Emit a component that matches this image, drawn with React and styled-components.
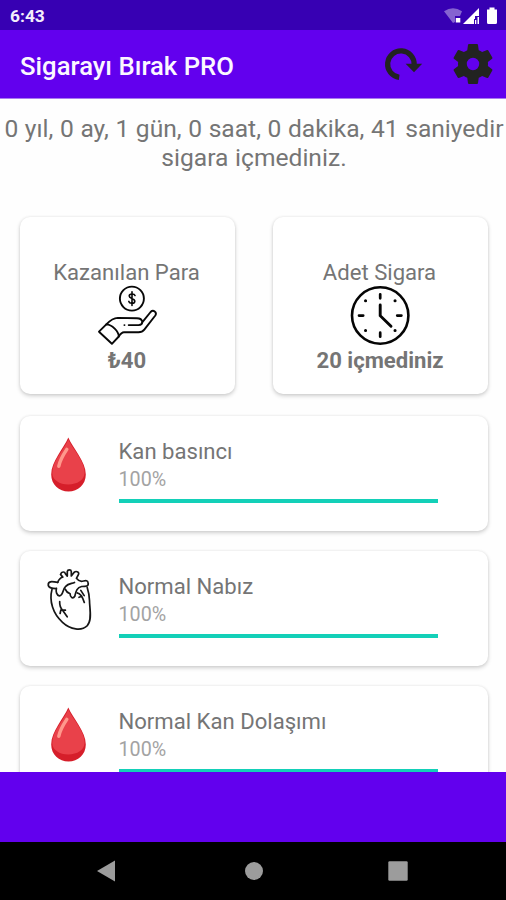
import React from 'react';
import styled, { createGlobalStyle } from 'styled-components';

const GlobalStyle = createGlobalStyle`
  * { box-sizing: border-box; }
  body { margin: 0; background: #fefefe; }
`;

const Screen = styled.div`
  display: flex;
  flex-direction: column;
  width: 506px;
  height: 900px;
  overflow: hidden;
  background: #fefefe;
  color: #757575;
  font-family: Roboto, 'Liberation Sans', sans-serif;
`;

const StatusBar = styled.div`
  display: flex;
  flex: none;
  align-items: center;
  justify-content: space-between;
  height: 30px;
  padding: 2px 8px 0 10px;
  background: #3700b3;
  color: #f3eefb;
  font-size: 17.4px;
  font-weight: 700;
`;

const StatusIcons = styled.svg`
  display: block;
  width: 56px;
  height: 20px;
`;

const AppBar = styled.header`
  display: flex;
  flex: none;
  align-items: center;
  justify-content: space-between;
  height: 69px;
  padding: 0 9px 0 20px;
  background: #6200ee;
  border-bottom: 1px solid #a97af0;
`;

const AppTitle = styled.h1`
  margin: 3px 0 0;
  color: #fbf7ff;
  font-size: 25.7px;
  font-weight: 500;
  line-height: 30px;
  white-space: nowrap;
`;

const Actions = styled.div`
  display: flex;
  gap: 22px;
`;

const ActionButton = styled.button`
  display: block;
  width: 48px;
  height: 48px;
  padding: 0;
  border: 0;
  background: none;
  svg { display: block; }
`;

const Content = styled.main`
  flex: 1;
  min-height: 0;
  overflow: hidden;
`;

const Duration = styled.p`
  margin: 0;
  height: 118px;
  padding-top: 15px;
  padding-left: 2px;
  font-size: 24.6px;
  line-height: 29px;
  text-align: center;
  white-space: nowrap;
  word-spacing: 0.5px;
`;

const Card = styled.section`
  border-radius: 10px;
  background: #fff;
  box-shadow: 0 2px 4px rgba(0, 0, 0, 0.18), 0 0 3px rgba(0, 0, 0, 0.08);
`;

const SummaryGrid = styled.div`
  display: grid;
  grid-template-columns: 215px 215px;
  gap: 38px;
  padding: 0 20px;
`;

const SummaryCard = styled(Card)`
  display: flex;
  flex-direction: column;
  align-items: center;
  height: 177px;
  padding-top: 42px;
  svg { display: block; }
`;

const SummaryLabel = styled.div`
  height: 26px;
  padding-right: 2px;
  font-size: 22.1px;
  line-height: 26px;
`;

const SummaryValue = styled.div`
  margin-top: 1px;
  padding-right: 1px;
  font-size: 22.1px;
  font-weight: 700;
  line-height: 27px;
`;

const HealthList = styled.div`
  display: flex;
  flex-direction: column;
  gap: 20px;
  padding: 22px 18px 0 20px;
`;

const HealthCard = styled(Card)`
  display: grid;
  grid-template-columns: 98.5px 319px;
  height: 115px;
`;

const IconCell = styled.div`
  padding: 18px 0 0 18px;
  svg { display: block; }
`;

const HealthBody = styled.div`
  padding-top: 22px;
`;

const HealthTitle = styled.div`
  font-size: 22.1px;
  line-height: 27px;
`;

const Percent = styled.div`
  margin-top: 3px;
  color: #a3a3a3;
  font-size: 19.7px;
  line-height: 24px;
`;

const Track = styled.div`
  height: 4px;
  margin-top: 7px;
  background: #c4eee8;
`;

const Fill = styled.div`
  height: 100%;
  background: #13d0b8;
`;

const BottomBar = styled.div`
  flex: none;
  height: 70px;
  background: #6200ee;
`;

const NavBar = styled.nav`
  display: grid;
  grid-template-columns: 18px 18px 20px;
  flex: none;
  align-items: center;
  column-gap: 128px;
  height: 58px;
  padding-left: 97px;
  background: #000;
  svg { display: block; }
  svg:last-child { margin-left: -1px; }
  svg:nth-child(2) { margin-left: 1.5px; }
`;

function StatusGlyphs() {
  return (
    <StatusIcons viewBox="442 5 56 20">
      <path d="M444 10.2Q453 4.2 462 10.2L460 15H455V21L453 22Z" fill="#8563d0" />
      <rect x="455.8" y="17" width="4.5" height="4.5" fill="#fff" />
      <path d="M463 23 479 7V15H475V18H474V23Z" fill="#fff" />
      <path d="M475 19h1.3v4H475zM477.5 16h1.5v7h-1.5z" fill="#fff" />
      <path d="M489.5 6.5h5v2H497V21.5Q497 23 495.5 23h-7Q487 23 487 21.5V8.5h2.5Z" fill="#fff" />
    </StatusIcons>
  );
}

function RestartIcon() {
  return (
    <svg width="48" height="48" viewBox="379 40 48 48">
      <path d="M399.2 77.4A13.3 13.3 0 1 1 414.2 65" fill="none" stroke="#222321" strokeWidth="5.2" />
      <path d="M405.6 63.7H422.2L414 72.3Z" fill="#222321" />
    </svg>
  );
}

function GearIcon() {
  return (
    <svg width="48" height="48" viewBox="0 0 24 24">
      <path
        fill="#222321"
        fillRule="evenodd"
        d="M19.43 12.98c.04-.32.07-.64.07-.98s-.03-.66-.07-.98l2.11-1.65c.19-.15.24-.42.12-.64l-2-3.46c-.12-.22-.39-.3-.61-.22l-2.49 1c-.52-.4-1.08-.73-1.69-.98l-.38-2.65C14.46 2.18 14.25 2 14 2h-4c-.25 0-.46.18-.49.42l-.38 2.65c-.61.25-1.17.59-1.69.98l-2.49-1c-.23-.09-.49 0-.61.22l-2 3.46c-.13.22-.07.49.12.64l2.11 1.65c-.04.32-.07.65-.07.98s.03.66.07.98l-2.11 1.65c-.19.15-.24.42-.12.64l2 3.46c.12.22.39.3.61.22l2.49-1c.52.4 1.08.73 1.69.98l.38 2.65c.03.24.24.42.49.42h4c.25 0 .46-.18.49-.42l.38-2.65c.61-.25 1.17-.59 1.69-.98l2.49 1c.23.09.49 0 .61-.22l2-3.46c.12-.22.07-.49-.12-.64zM12 15.1a3.1 3.1 0 1 1 0-6.2 3.1 3.1 0 0 1 0 6.2z"
      />
    </svg>
  );
}

function MoneyHandIcon() {
  return (
    <svg width="61" height="61" viewBox="97 285 61 61" fill="none" stroke="#080808" strokeWidth="1.9" strokeLinejoin="round" strokeLinecap="round">
      <circle cx="131.9" cy="298.6" r="12" />
      <path d="M135 295.5C134.4 293.7 129.3 293.2 129.2 296.1C129.2 298.8 134.8 298 134.8 301.2C134.7 304.1 129.5 303.9 128.8 301.4M132 291.7V305.5" strokeWidth="1.6" />
      <path d="M106.3 324.4 99 331.7 111.9 343.8 118.8 336.5C118.8 331.5 112 324.5 106.3 324.4Z" />
      <path d="M106.3 324.4C110 320.6 113.2 318 117.8 317.9L137 318.2C143.2 318.2 144.3 325.1 138.5 325.1H128.7M142 322.6 150.6 312C153.3 309.3 157.3 312.2 155.3 315.5L144.3 329.7C142.5 332 141.2 332.3 138.5 332.3H124C121.6 332.3 120.2 334.3 118.8 336.5" />
      <path d="M124.4 325.1h.1" />
    </svg>
  );
}

function ClockIcon() {
  return (
    <svg width="61" height="61" viewBox="350 285 61 61" fill="none" stroke="#050505" strokeLinecap="round">
      <circle cx="380.2" cy="315.5" r="28.2" strokeWidth="2.6" />
      <path d="M380.2 305V315.7L391 326.3" strokeWidth="2.9" />
      <path d="M380.2 294.3V298.3M380.2 332.7V336.7M359 315.6H363.2M397.2 315.6H401.4" strokeWidth="2.7" />
      <path d="M365.5 300.8h.1M395 300.8h.1M365.5 330.5h.1M395 330.5h.1" strokeWidth="3" />
    </svg>
  );
}

function DropIcon() {
  return (
    <svg width="62" height="62" viewBox="38 434 62 62">
      <path d="M68.3 437.6C73 448.5 85.8 461.5 85.8 474.5C85.8 484.5 78 491.6 68.5 491.6S51.2 484.5 51.2 474.5C51.2 461.5 63.7 448.5 68.3 437.6Z" fill="#d61e2a" />
      <path d="M68.3 439.5C73.2 450 84.8 461 84.6 473C84.4 480 77.2 484.4 68.3 484.4S52.5 479.7 52.3 473.4C52 461.5 63.8 450 68.3 439.5Z" fill="#e9414a" />
      <path d="M66.8 449.4C63.6 454.2 60 459.8 58.8 466.3" fill="none" stroke="#ff988c" strokeWidth="3.5" strokeLinecap="round" />
    </svg>
  );
}

function HeartIcon() {
  return (
    <svg width="62" height="62" viewBox="38 569 62 62" fill="none" stroke="#161616" strokeWidth="1.7" strokeLinejoin="round" strokeLinecap="round">
      <path d="M52 589.4C48.9 601 53 614 62.5 622.3C70.5 629.7 81.5 631.3 87.3 625.6C92.5 620 89.5 608 89.5 600.5C89.4 595.5 88.5 591.4 87.2 587.4" />
      <path d="M57.8 582.3C54.5 582.6 49.5 579.3 48.3 583.8C47.5 588.3 53.4 588.6 56.3 588.7" />
      <path d="M57.7 582.4C58.6 579 61.5 577.2 62.8 577.1L60.5 574.4C61.5 571.2 64.8 571.4 65.4 573.7L67.3 576.1V571.5C67.7 569.3 71.1 569.3 71.3 571.5V576L74 572.5C76.5 570.2 80 572.6 78.2 575L76.4 578.3C77.9 580.3 79.2 581.2 81.5 581.3C84 581.2 87.5 579.3 88.1 582.7C89 586.5 85.7 586.5 81.6 586.5C77.2 587.4 76 590.6 74.8 596.3C72.8 599.3 70.1 597.4 70.1 593.8C68 592.9 66.2 591.8 65.2 589.1" />
      <path d="M56.4 588.4C55.7 591.7 56.6 595.3 59.4 595.8C63.5 595.9 62.2 589.5 65.7 586.4C68.3 583.4 71.7 583.8 74.5 582.5" />
      <path d="M59.7 601.6C59.5 605.4 60.5 608 62.6 610.3L67.2 616.8M60.8 610.2 60.1 613.5M61 610.2H65.4M77.1 592.8C80.2 593.2 82.5 596.5 84.3 602.5M79 597.3 82 596.3M80.8 590.4 84.2 595.6" />
    </svg>
  );
}

const HEALTH = [
  { title: 'Kan basıncı', percent: 100, Icon: DropIcon },
  { title: 'Normal Nabız', percent: 100, Icon: HeartIcon },
  { title: 'Normal Kan Dolaşımı', percent: 100, Icon: DropIcon },
];

export default function App() {
  return (
    <Screen>
      <GlobalStyle />
      <StatusBar>
        <span>6:43</span>
        <StatusGlyphs />
      </StatusBar>
      <AppBar>
        <AppTitle>Sigarayı Bırak PRO</AppTitle>
        <Actions>
          <ActionButton><RestartIcon /></ActionButton>
          <ActionButton><GearIcon /></ActionButton>
        </Actions>
      </AppBar>
      <Content>
        <Duration>
          0 yıl, 0 ay, 1 gün, 0 saat, 0 dakika, 41 saniyedir
          <br />
          sigara içmediniz.
        </Duration>
        <SummaryGrid>
          <SummaryCard>
            <SummaryLabel>Kazanılan Para</SummaryLabel>
            <MoneyHandIcon />
            <SummaryValue>₺40</SummaryValue>
          </SummaryCard>
          <SummaryCard>
            <SummaryLabel>Adet Sigara</SummaryLabel>
            <ClockIcon />
            <SummaryValue>20 içmediniz</SummaryValue>
          </SummaryCard>
        </SummaryGrid>
        <HealthList>
          {HEALTH.map(({ title, percent, Icon }) => (
            <HealthCard key={title}>
              <IconCell><Icon /></IconCell>
              <HealthBody>
                <HealthTitle>{title}</HealthTitle>
                <Percent>{percent}%</Percent>
                <Track><Fill style={{ width: `${percent}%` }} /></Track>
              </HealthBody>
            </HealthCard>
          ))}
        </HealthList>
      </Content>
      <BottomBar />
      <NavBar>
        <svg width="18" height="22" viewBox="0 0 18 22"><path d="M0 11 18 .5v21Z" fill="#9c9c9c" /></svg>
        <svg width="18" height="18" viewBox="0 0 18 18"><circle cx="9" cy="9" r="9" fill="#9c9c9c" /></svg>
        <svg width="20" height="20" viewBox="0 0 20 20"><rect x=".3" y=".3" width="19.4" height="19.4" rx="1.2" fill="#9c9c9c" /></svg>
      </NavBar>
    </Screen>
  );
}
